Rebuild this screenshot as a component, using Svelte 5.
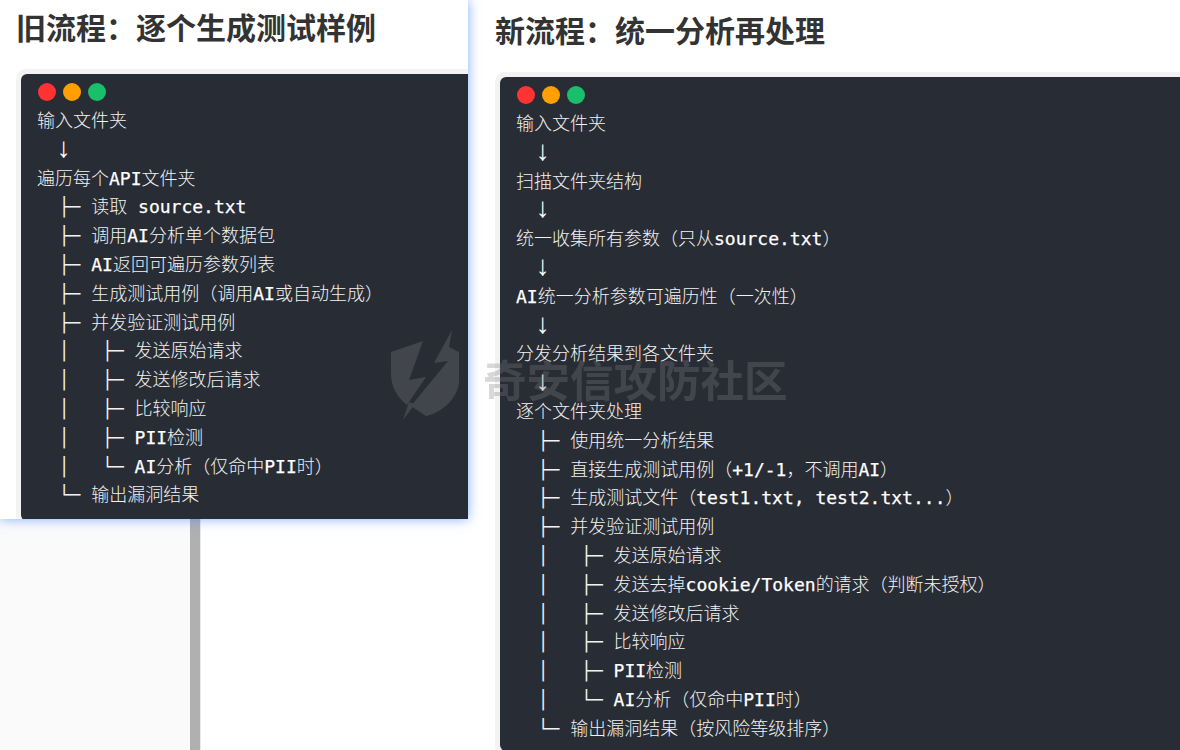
<script>
  const oldFlow = [
    '输入文件夹',
    '  ↓',
    '遍历每个API文件夹',
    '  ├─ 读取 source.txt',
    '  ├─ 调用AI分析单个数据包',
    '  ├─ AI返回可遍历参数列表',
    '  ├─ 生成测试用例（调用AI或自动生成）',
    '  ├─ 并发验证测试用例',
    '  │   ├─ 发送原始请求',
    '  │   ├─ 发送修改后请求',
    '  │   ├─ 比较响应',
    '  │   ├─ PII检测',
    '  │   └─ AI分析（仅命中PII时）',
    '  └─ 输出漏洞结果'
  ];
  const newFlow = [
    '输入文件夹',
    '  ↓',
    '扫描文件夹结构',
    '  ↓',
    '统一收集所有参数（只从source.txt）',
    '  ↓',
    'AI统一分析参数可遍历性（一次性）',
    '  ↓',
    '分发分析结果到各文件夹',
    '  ↓',
    '逐个文件夹处理',
    '  ├─ 使用统一分析结果',
    '  ├─ 直接生成测试用例（+1/-1，不调用AI）',
    '  ├─ 生成测试文件（test1.txt, test2.txt...）',
    '  ├─ 并发验证测试用例',
    '  │   ├─ 发送原始请求',
    '  │   ├─ 发送去掉cookie/Token的请求（判断未授权）',
    '  │   ├─ 发送修改后请求',
    '  │   ├─ 比较响应',
    '  │   ├─ PII检测',
    '  │   └─ AI分析（仅命中PII时）',
    '  └─ 输出漏洞结果（按风险等级排序）'
  ];
  // odd pieces are the latin runs, those render heavier
  const pieces = (line) => line.split(/([\x20-\x7e]+)/);
</script>

{#snippet flow(lines)}
  <div class="dots"><i class="red"></i><i class="orange"></i><i class="green"></i></div>
  {#each lines as line}
    <div class="row">
      {#each pieces(line) as part, i}
        {#if i % 2}<b>{part}</b>{:else if part === '↓'}<span class="arrow">{part}</span>{:else}{part}{/if}
      {/each}
    </div>
  {/each}
{/snippet}

<div class="stage">
  <div class="backdrop">
    <div class="sidebar"></div>
    <div class="scrollbar"></div>
    <div class="divider"></div>
  </div>

  <div class="columns">
    <section class="panel old">
      <h2>旧流程：逐个生成测试样例</h2>
      <div class="frame">
        <div class="code">
          {@render flow(oldFlow)}
        </div>
      </div>
    </section>

    <section class="panel new">
      <h2>新流程：统一分析再处理</h2>
      <div class="frame">
        <div class="code">
          {@render flow(newFlow)}
        </div>
      </div>
    </section>
  </div>

  <div class="watermark">
    <svg width="120" height="100" viewBox="0 0 120 100">
      <path d="M11 27 L43 16 L29 55 L46 52 L27 80 C17 72 11 62 11 48 Z" />
      <path d="M72 5 L69 22 L79 27 L79 56 C79 72 62 88 46 91 L31 81 L68 36 L54 38 Z" />
      <path d="M23 95 L29 77 L35 79 Z" />
    </svg>
    <span>奇安信攻防社区</span>
  </div>
</div>

<style>
  :global(body) {
    overflow: hidden;
  }
  .stage {
    display: grid;
    width: 1180px;
    height: 750px;
    overflow: hidden;
    position: relative;
    background: #fff;
    font-family: "Noto Sans CJK SC", sans-serif;
  }
  .backdrop,
  .columns {
    grid-area: 1 / 1;
  }
  .backdrop {
    display: flex;
    padding-top: 519px;
  }
  .sidebar {
    width: 190px;
    background: #fafafa;
  }
  .scrollbar {
    width: 10px;
    background: #b0b0b0;
  }
  .divider {
    width: 1px;
    background: #eaeaea;
  }
  .columns {
    display: flex;
    align-items: flex-start;
    min-width: 0;
  }
  .panel {
    flex: none;
    box-sizing: border-box;
  }
  .old {
    width: 468px;
    height: 519px;
    padding-left: 16px;
    background: #fff;
    overflow: hidden;
    box-shadow: 0 0 11px rgba(60, 130, 255, 0.65);
    position: relative;
  }
  .new {
    width: 712px;
    height: 750px;
    padding-left: 27px;
    padding-top: 3px;
    overflow: hidden;
  }
  h2 {
    margin: 0 0 23px;
    padding-top: 6px;
    font-size: 30px;
    line-height: 40px;
    font-weight: 700;
    color: #333;
    white-space: nowrap;
  }
  .frame {
    width: 900px;
    border: 5px solid #f3f3f3;
    border-radius: 10px;
    box-sizing: border-box;
  }
  .code {
    background: #282c34;
    border-radius: 6px;
    padding: 9px 16px 11px;
    color: #f2f2f2;
    font-family: "DejaVu Sans Mono", "Noto Sans CJK SC", monospace;
    font-size: 18px;
    font-weight: 300;
  }
  .new .code {
    padding-bottom: 7px;
  }
  .dots {
    display: flex;
    gap: 7px;
    height: 18px;
    margin: 0 0 6px 1px;
  }
  .dots i {
    width: 18px;
    height: 18px;
    border-radius: 50%;
  }
  .red { background: #ff3333; }
  .orange { background: #ff9f00; }
  .green { background: #1abf6b; }
  .row {
    line-height: 28.8px;
    height: 28.8px;
    white-space: pre;
  }
  .row b {
    font-weight: 400;
    color: #fff;
    -webkit-text-stroke: 0.25px #fff;
  }
  .arrow {
    display: inline-block;
    width: 10.84px;
    height: 28.8px;
    margin-left: -3.5px;
    margin-right: 3.5px;
    vertical-align: top;
    text-align: center;
    font-family: "Liberation Mono", monospace;
    font-size: 28px;
    font-weight: 400;
    color: #fff;
  }
  .watermark {
    position: absolute;
    left: 380px;
    top: 325px;
    display: flex;
    align-items: center;
    gap: 0;
    opacity: 0.3;
    color: #808080;
    pointer-events: none;
  }
  .watermark svg {
    fill: #808080;
    filter: blur(0.5px);
  }
  .watermark span {
    margin: 6px 0 0 -17px;
    font-size: 43.5px;
    font-weight: 700;
    white-space: nowrap;
    filter: blur(0.7px);
  }
</style>
